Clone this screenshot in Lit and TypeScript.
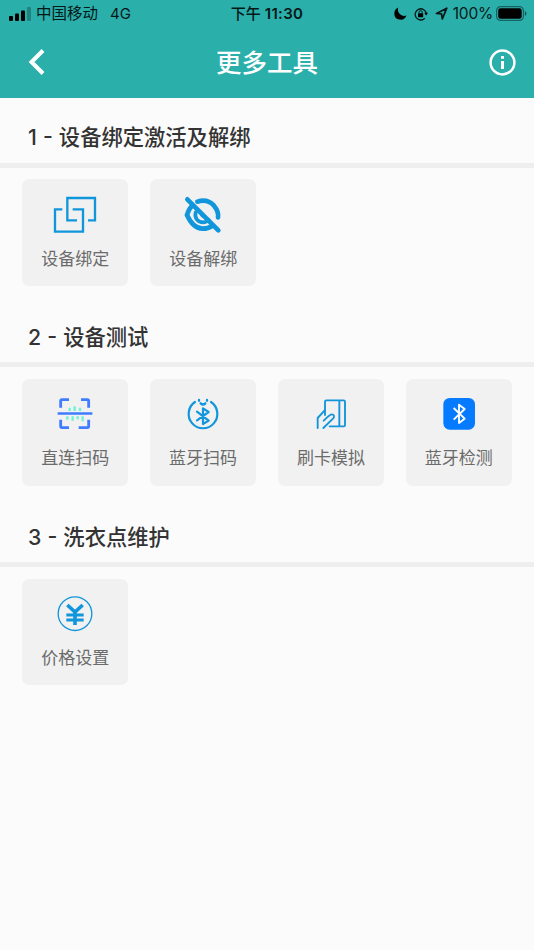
import { LitElement, html, css, svg, TemplateResult } from "lit";
import { customElement, property } from "lit/decorators.js";

const glyphs: Record<string, TemplateResult> = {
  bind: svg`<g fill="none" stroke="#1296db" stroke-width="7">
    <path d="M78 88H49V21H132V88H111"/><path d="M34 55H12V122H96V55H65"/></g>`,
  unbind: svg`<g fill="none" stroke="#1296db" stroke-width="14" stroke-linecap="round">
    <path d="M25 25L118 118"/>
    <path d="M55 32C74 26 93 31 105 44C115 56 119 67 117 79"/>
    <path d="M37 47C31 53 27 62 24 72C35 97 49 112 71 113C82 113 92 110 99 105"/>
    <path stroke-width="11" d="M50 64C46 82 57 94 72 94C80 94 86 90 89 86"/>
    <path stroke-width="9" d="M68 67C67 74 70 76 75 76"/></g>`,
  scan: svg`<g fill="none" stroke="#3f7cff" stroke-width="8.5">
    <path d="M29 53V33Q29 29 33 29H54M90 29H109Q113 29 113 33V53M113 89V109Q113 113 109 113H83M54 113H33Q29 113 29 109V89"/>
    <path stroke-width="7" d="M20 70.5H124"/></g>
    <path fill="none" stroke="#6df3d6" stroke-width="7" d="M56 53V63M71 49V63M87 53V63M49 79V89M65 79V92M80 79V88M95 79V94"/>`,
  btscan: svg`<g fill="none" stroke="#1296db" stroke-width="6.6" stroke-linecap="round" stroke-linejoin="round">
    <path d="M48 36A43 43 0 1 0 96 36"/>
    <path d="M60 30V32M84 30V32M65 40Q72 47 79 40" stroke-width="7"/>
    <path d="M54 65L89 92L72 102V55L89 66L54 91"/></g>`,
  card: svg`<g fill="none" stroke="#1296db" stroke-width="5.6" stroke-linejoin="round" stroke-linecap="round">
    <path d="M54 75V35Q54 31 58 31H110Q114 31 114 35V105Q114 109 110 109H68M97 31V109"/>
    <path d="M32 114V84L53 61M49 114L78 86C84 80 81 73 74 73C69 73 66 77 50 92"/></g>`,
  btcheck: svg`<rect x="25" y="24" width="95" height="95" rx="19" fill="#077bff"/>
    <path fill="none" stroke="#fff" stroke-width="5.6" stroke-linejoin="round" d="M56 54L89 86L72 99V44L89 57L56 89"/>`,
  price: svg`<circle cx="72" cy="71" r="50.5" fill="none" stroke="#1296db" stroke-width="4"/>
    <path fill="none" stroke="#1296db" stroke-width="11" d="M49 45L72 66L95 45M72 64V105"/>
    <path fill="none" stroke="#1296db" stroke-width="9" d="M46 75H98M46 90H98"/>`,
};

@customElement("tool-tile")
class ToolTile extends LitElement {
  @property() icon = "";
  @property() label = "";
  static styles = css`
    :host { display: flex; flex-direction: column; align-items: center; box-sizing: border-box;
      width: 106.4px; height: 106.8px; padding-top: 11.3px; border-radius: 7px; background: #f1f1f1; }
    svg { width: 48px; height: 48px; display: block; }
    .label { margin-top: 8px; font-size: 17px; line-height: 24px; color: #6b6b6b; white-space: nowrap; }
  `;
  render() {
    return html`<svg viewBox="0 0 144 144">${glyphs[this.icon]}</svg>
      <div class="label">${this.label}</div>`;
  }
}

@customElement("status-bar")
class StatusBar extends LitElement {
  static styles = css`
    :host { display: grid; grid-template-columns: 1fr auto 1fr; align-items: center; height: 28px;
      color: #061817; font-size: 15.5px; line-height: 20px; }
    svg { display: block; flex: none; }
    .side { display: flex; align-items: center; }
    .left { padding-left: 9px; }
    .signal { margin: 0 5px 1px 0; }
    .net { margin-left: 12px; font-size: 15px; }
    .time { font-weight: 500; white-space: nowrap; font-size: 15px; }
    .time b { font-weight: 600; letter-spacing: 0.3px; }
    .right { justify-content: flex-end; padding-right: 7px; }
    .right svg { margin-bottom: 1px; }
    .right .moon { margin-right: 7px; }
    .right .lock { margin-right: 7px; }
    .right .arrow { margin-right: 5px; }
    .pct { margin-right: 3px; font-size: 15.5px; letter-spacing: -0.2px; }
  `;
  render() {
    return html`
      <div class="side left">
        <svg class="signal" width="22" height="14" viewBox="0 0 22 14">
          <rect y="9" width="4" height="5" rx="1"/><rect x="6" y="6.5" width="4" height="7.5" rx="1"/>
          <rect x="12" y="3.5" width="4" height="10.5" rx="1"/><rect x="18" width="4" height="14" rx="1" opacity=".25"/>
        </svg>
        <span>中国移动</span><span class="net">4G</span>
      </div>
      <div class="time">下午 <b>11:30</b></div>
      <div class="side right">
        <svg class="moon" width="13" height="13" viewBox="0 0 13 13"><path d="M4.2 .4C2 1.4 .3 3.7 .3 6.4a6.3 6.3 0 0 0 12.2 2.2A6.5 6.5 0 0 1 4.2 .4Z"/></svg>
        <svg class="lock" width="14" height="14" viewBox="0 0 14 14">
          <path d="M10.8 11.3A5.6 5.6 0 1 1 12.2 6" fill="none" stroke="#061817" stroke-width="1.3"/>
          <path d="M10.3 5.7H14L12.2 8.5Z"/><rect x="4" y="6.2" width="5.2" height="4" rx=".6"/>
          <path d="M5 6.5V5.2a1.6 1.6 0 0 1 3.2 0V6.5" fill="none" stroke="#061817" stroke-width="1"/>
        </svg>
        <svg class="arrow" width="13" height="13" viewBox="0 0 13 13"><path d="M1.5 6.5L11.8 1.2L7.3 11.8L6.5 6.8Z" fill="none" stroke="#061817" stroke-width="1.7" stroke-linejoin="round"/></svg>
        <span class="pct">100%</span>
        <svg width="31" height="15" viewBox="0 0 31 15">
          <rect x=".6" y=".6" width="26.8" height="13.8" rx="4" fill="none" stroke="#061817" stroke-opacity=".5" stroke-width="1.2"/>
          <rect x="2.2" y="2.3" width="23.5" height="10.4" rx="2.3"/>
          <path d="M28.8 5V10Q30.500 9.2 30.500 7.5T28.8 5Z" opacity=".5"/>
        </svg>
      </div>`;
  }
}

const sections = [
  { title: "1 - 设备绑定激活及解绑", tools: [["bind", "设备绑定"], ["unbind", "设备解绑"]] },
  { title: "2 - 设备测试", tools: [["scan", "直连扫码"], ["btscan", "蓝牙扫码"], ["card", "刷卡模拟"], ["btcheck", "蓝牙检测"]] },
  { title: "3 - 洗衣点维护", tools: [["price", "价格设置"]] },
];

@customElement("app-root")
class AppRoot extends LitElement {
  static styles = css`
    :host { display: block; height: 950px; background: #fbfbfb; overflow: hidden;
      font-family: Inter, "Noto Sans CJK SC", sans-serif; }
    header { height: 98px; background: #2bafab; }
    nav { display: grid; grid-template-columns: 1fr auto 1fr; align-items: center; height: 68px; padding: 0 18px 0 28px; }
    nav svg { display: block; }
    .info { justify-self: end; }
    h1 { margin: 0 10px 0 0; padding-top: 1px; font-size: 25.5px; font-weight: 500; line-height: 36px; color: #fff; }
    section { height: 199.6px; }
    h2 { box-sizing: border-box; height: 69.6px; margin: 0; padding: 22.4px 0 0 28px; border-bottom: 5px solid #eee;
      font-size: 21.3px; font-weight: 500; line-height: 34px; color: #333; white-space: nowrap; word-spacing: 0.4px; }
    .tiles { display: flex; gap: 21.6px; padding: 11.8px 22px 0; }
  `;
  render() {
    return html`
      <header>
        <status-bar></status-bar>
        <nav>
          <svg width="26" height="28" viewBox="0 0 26 28"><path d="M15 2.500L3.500 14L15 25.500" fill="none" stroke="#fff" stroke-width="4"/></svg>
          <h1>更多工具</h1>
          <svg class="info" width="27" height="27" viewBox="0 0 27 27"><circle cx="13.5" cy="13.5" r="11.9" fill="none" stroke="#fff" stroke-width="2.5"/>
            <path d="M12 7H15V9.700H12ZM12 12H15V20H12Z" fill="#fff"/></svg>
        </nav>
      </header>
      ${sections.map((s) => html`<section>
        <h2>${s.title}</h2>
        <div class="tiles">${s.tools.map(([icon, label]) => html`<tool-tile icon=${icon} label=${label}></tool-tile>`)}</div>
      </section>`)}`;
  }
}
